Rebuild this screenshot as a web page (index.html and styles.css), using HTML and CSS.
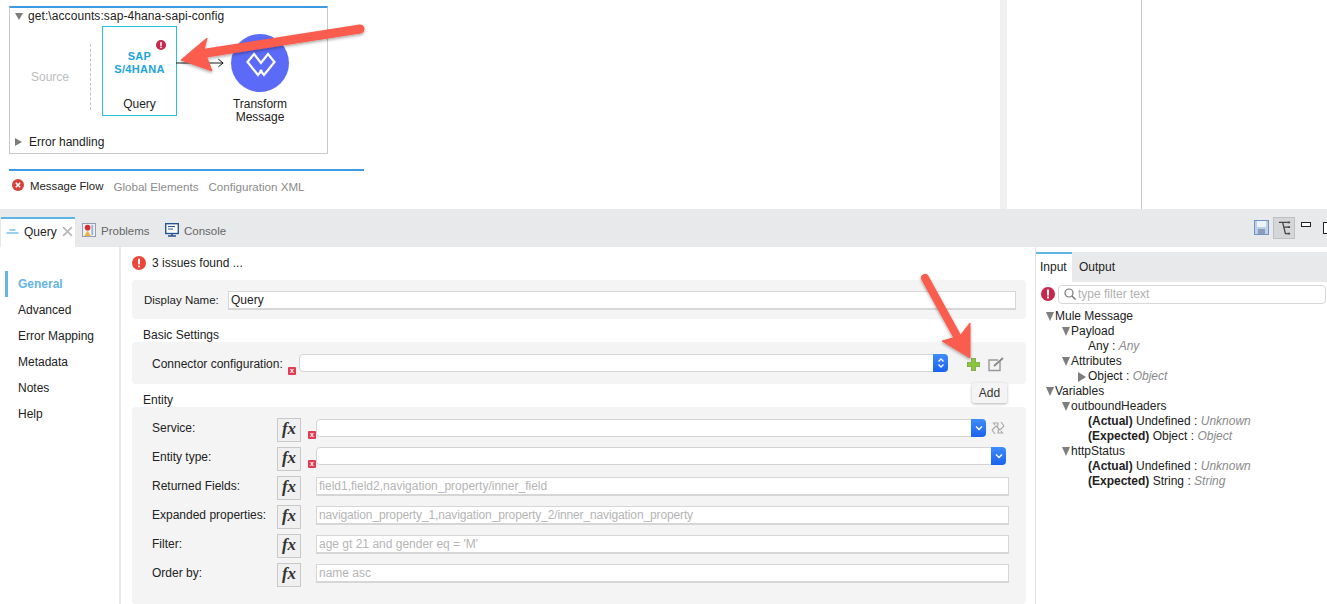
FILE: index.html
```html
<!DOCTYPE html>
<html lang="en">
<head>
<meta charset="utf-8">
<title>Query</title>
<link rel="stylesheet" href="styles.css">
</head>
<body>
<div class="app">
  <section class="top">
    <div class="editor">
      <div class="flow">
        <div class="flow-head"><span class="tri tri-down"></span>get:\accounts:sap-4hana-sapi-config</div>
        <div class="canvas">
          <span class="source">Source</span>
          <span class="dash"></span>
          <div class="node-query">
            <svg class="node-err" viewBox="0 0 10 10"><circle cx="5" cy="5" r="5" fill="#c8264a"/><rect x="4.2" y="2" width="1.6" height="3.8" fill="#fff"/><rect x="4.2" y="6.6" width="1.6" height="1.5" fill="#fff"/></svg>
            <div class="sap">SAP<br>S/4HANA</div>
            <div class="node-name">Query</div>
          </div>
          <svg class="connector" viewBox="0 0 52 10"><path d="M0 5H49M44 1l5 4-5 4" fill="none" stroke="#111" stroke-width="1"/></svg>
          <div class="node-transform">
            <svg class="circle" viewBox="0 0 58 58"><circle cx="29" cy="29" r="29" fill="#5c6bf7"/><path d="M31 36L27 41 16.500 28 23 20 30 29 37 20 43.500 28 33 41 29 36" fill="none" stroke="#fff" stroke-width="2.200"/></svg>
            <div class="node-name">Transform<br>Message</div>
          </div>
        </div>
        <div class="flow-foot"><span class="tri tri-right"></span>Error handling</div>
      </div>
      <div class="flow-tabs">
        <svg class="flow-err" viewBox="0 0 12 12"><circle cx="6" cy="6" r="6" fill="#d8413a"/><path d="M3.800 3.800l4.400 4.400M8.200 3.800l-4.400 4.400" stroke="#fff" stroke-width="1.600"/></svg>
        <span class="flow-tab active">Message Flow</span>
        <span class="flow-tab">Global Elements</span>
        <span class="flow-tab">Configuration XML</span>
      </div>
    </div>
    <div class="sash"></div>
    <div class="mid"></div>
    <div class="far"></div>
  </section>

  <nav class="bar">
    <div class="tab tab-active">
      <svg class="tab-q" viewBox="0 0 12 6"><path d="M3 1h6M0 4h12" stroke="#7cc0e8" stroke-width="1.400"/></svg>
      <span>Query</span>
      <svg class="tab-x" viewBox="0 0 10 10"><path d="M1 1l8 8M9 1l-8 8" stroke="#bdbdbd" stroke-width="1.800"/></svg>
    </div>
    <div class="tab tab-problems">
      <svg class="tab-ic" viewBox="0 0 15 15"><rect x=".5" y=".5" width="14" height="14" fill="#eef1f6" stroke="#8c9ab0"/><circle cx="6" cy="5" r="3" fill="#d92c2c"/><path d="M6 8l3.500 6h-7z" fill="#eeb23a"/><path d="M11 2v11" stroke="#9fb3cc" stroke-width="2"/></svg>
      <span>Problems</span>
    </div>
    <div class="tab">
      <svg class="tab-ic" viewBox="0 0 14 14"><rect x=".7" y=".7" width="12.600" height="9.800" fill="#fff" stroke="#28558f" stroke-width="1.400"/><path d="M3 3.500h7M3 6h5" stroke="#28558f"/><path d="M3 13h8M7 11v2" stroke="#28558f" stroke-width="1.600"/></svg>
      <span>Console</span>
    </div>
    <div class="bar-tools">
      <svg class="tool-save" viewBox="0 0 15 15"><rect x=".5" y=".5" width="14" height="14" fill="#bcd0ea" stroke="#6f93c4"/><rect x="3" y="1" width="9" height="6" fill="#eef3fa"/><rect x="4" y="9" width="7" height="5" fill="#8a9cb6"/></svg>
      <span class="tool-tree"><svg viewBox="0 0 14 16"><path d="M1 2h4l3 12h2M5.500 7H10M5 2h5" fill="none" stroke="#444" stroke-width="1.400"/><path d="M10 1h3v2h-3zM10 6h3v2h-3zM10 13h3v2h-3z" fill="#444"/></svg></span>
      <span class="tool-min"></span>
      <span class="tool-max"></span>
    </div>
  </nav>

  <section class="bottom">
    <aside class="side">
      <a class="side-item current">General</a>
      <a class="side-item">Advanced</a>
      <a class="side-item">Error Mapping</a>
      <a class="side-item">Metadata</a>
      <a class="side-item">Notes</a>
      <a class="side-item">Help</a>
    </aside>

    <main class="form">
      <div class="issues">
        <svg class="issue-ic" viewBox="0 0 14 14"><circle cx="7" cy="7" r="7" fill="#e8473a"/><rect x="6" y="2.600" width="2" height="5.800" rx="1" fill="#fff"/><rect x="6" y="9.400" width="2" height="2" rx="1" fill="#fff"/></svg>
        <span>3 issues found ...</span>
      </div>

      <div class="panel panel-name">
        <label class="lbl">Display Name:</label>
        <input class="text name-input" value="Query">
      </div>

      <h3 class="group">Basic Settings</h3>
      <div class="panel panel-conn">
        <label class="lbl conn-lbl">Connector configuration:</label>
        <span class="err err-conn">x</span>
        <div class="select conn-select"><span class="sel-btn updown"><svg viewBox="0 0 8 12"><path d="M1.500 4.500L4 2l2.500 2.500M1.500 7.500L4 10l2.500-2.500" fill="none" stroke="#fff" stroke-width="1.300"/></svg></span></div>
        <svg class="plus" viewBox="0 0 13 13"><path d="M4.500 0h4v4.500H13v4H8.500V13h-4V8.500H0v-4h4.500z" fill="#8cc63f" stroke="#5f8f2a" stroke-width=".6"/></svg>
        <svg class="edit" viewBox="0 0 16 15"><path d="M12 4v9.500H1V3h9" fill="#f3f3f3" stroke="#999" stroke-width="1.400"/><path d="M6 9l9-8" stroke="#888" stroke-width="1.800"/></svg>
      </div>

      <h3 class="group">Entity</h3>
      <div class="panel panel-entity">
        <div class="row">
          <label class="lbl">Service:</label>
          <span class="fx">fx</span>
          <span class="err">x</span>
          <div class="field-wrap">
            <div class="select svc-select"><span class="sel-btn"><svg viewBox="0 0 8 6"><path d="M1 1.500L4 4.500l3-3" fill="none" stroke="#fff" stroke-width="1.400"/></svg></span></div>
            <svg class="sync" viewBox="0 0 16 16"><path d="M2 10l4-4 1.500 1.500.5-4.500H3.500L5 5M14 6l-4 4-1.500-1.500-.5 4.500h4.500L11 11M2 10l3 4M14 6l-3-4" fill="none" stroke="#aaa" stroke-width="1.200"/></svg>
          </div>
        </div>
        <div class="row">
          <label class="lbl">Entity type:</label>
          <span class="fx">fx</span>
          <span class="err">x</span>
          <div class="field-wrap">
            <div class="select ent-select"><span class="sel-btn"><svg viewBox="0 0 8 6"><path d="M1 1.500L4 4.500l3-3" fill="none" stroke="#fff" stroke-width="1.400"/></svg></span></div>
          </div>
        </div>
        <div class="row">
          <label class="lbl">Returned Fields:</label>
          <span class="fx">fx</span>
          <span></span>
          <input class="text" placeholder="field1,field2,navigation_property/inner_field">
        </div>
        <div class="row">
          <label class="lbl">Expanded properties:</label>
          <span class="fx">fx</span>
          <span></span>
          <input class="text tight" placeholder="navigation_property_1,navigation_property_2/inner_navigation_property">
        </div>
        <div class="row">
          <label class="lbl">Filter:</label>
          <span class="fx">fx</span>
          <span></span>
          <input class="text" placeholder="age gt 21 and gender eq = 'M'">
        </div>
        <div class="row">
          <label class="lbl">Order by:</label>
          <span class="fx">fx</span>
          <span></span>
          <input class="text" placeholder="name asc">
        </div>
      </div>
    </main>

    <aside class="meta">
      <div class="meta-tabs">
        <span class="meta-tab on">Input</span>
        <span class="meta-tab">Output</span>
      </div>
      <div class="filter">
        <svg class="filter-err" viewBox="0 0 14 14"><circle cx="7" cy="7" r="7" fill="#c8264a"/><rect x="6" y="2.500" width="2" height="6" fill="#fff"/><rect x="6" y="9.500" width="2" height="2" fill="#fff"/></svg>
        <div class="search">
          <svg class="glass" viewBox="0 0 12 12"><circle cx="5" cy="5" r="4" fill="none" stroke="#777" stroke-width="1.200"/><path d="M8 8l3.500 3.500" stroke="#777" stroke-width="1.400"/></svg>
          <span>type filter text</span>
        </div>
      </div>
      <ul class="tree">
        <li class="lv0"><span class="tri tri-down"></span>Mule Message</li>
        <li class="lv1"><span class="tri tri-down"></span>Payload</li>
        <li class="lv2">Any : <i>Any</i></li>
        <li class="lv1"><span class="tri tri-down"></span>Attributes</li>
        <li class="lv2"><span class="tri tri-right"></span>Object : <i>Object</i></li>
        <li class="lv0"><span class="tri tri-down"></span>Variables</li>
        <li class="lv1"><span class="tri tri-down"></span>outboundHeaders</li>
        <li class="lv2"><b>(Actual)</b> Undefined : <i>Unknown</i></li>
        <li class="lv2"><b>(Expected)</b> Object : <i>Object</i></li>
        <li class="lv1"><span class="tri tri-down"></span>httpStatus</li>
        <li class="lv2"><b>(Actual)</b> Undefined : <i>Unknown</i></li>
        <li class="lv2"><b>(Expected)</b> String : <i>String</i></li>
      </ul>
    </aside>
  </section>

  <div class="tooltip">Add</div>

  <svg class="callouts" viewBox="0 0 1327 604">
    <defs>
      <filter id="sh" x="-20%" y="-20%" width="140%" height="140%"><feDropShadow dx="0" dy="1.500" stdDeviation="1.500" flood-color="#000" flood-opacity=".35"/></filter>
    </defs>
    <g filter="url(#sh)" fill="#fa5b4d" stroke="#fa5b4d">
      <path d="M360 29L200 54" stroke-width="9" stroke-linecap="round"/>
      <path d="M181 60L207 38L204 50L212 71Z" stroke-width="1"/>
      <path d="M925 278L958 338" stroke-width="8" stroke-linecap="round"/>
      <path d="M970 358L970 323L960 336L942 341Z" stroke-width="1"/>
    </g>
  </svg>
</div>
</body>
</html>
```

FILE: styles.css
```css
* { box-sizing: border-box; }
html, body { margin: 0; padding: 0; background: #fff; }
body {
  font-family: "Liberation Sans", Arial, sans-serif;
  font-size: 12px;
  color: #222;
  overflow: hidden;
}
.app { position: relative; width: 1327px; height: 604px; overflow: hidden; display: flex; flex-direction: column; }

/* top editor */
.top { display: flex; height: 209px; flex: none; }
.editor { width: 1000px; flex: none; padding: 6px 0 0 9px; }
.sash { width: 7px; background: #f0f0f1; flex: none; }
.mid { width: 135px; flex: none; border-right: 1px solid #c9c9c9; }
.far { flex: 1; }

.flow { width: 319px; height: 148px; border: 1px solid #c8c8c8; border-top: 2px solid #3d9be3; display: flex; flex-direction: column; }
.flow-head { height: 16px; padding-left: 5px; line-height: 16px; display: flex; align-items: center; letter-spacing: .08px; }
.canvas { position: relative; height: 111px; flex: none; }
.flow-foot { padding-left: 5px; display: flex; align-items: center; height: 14px; }
.tri { display: inline-block; flex: none; width: 0; height: 0; }
.tri-down { border-left: 4.500px solid transparent; border-right: 4.500px solid transparent; border-top: 7px solid #7e7e7e; margin-right: 5px; }
.tri-right { border-top: 4.500px solid transparent; border-bottom: 4.500px solid transparent; border-left: 7px solid #7e7e7e; margin-right: 7px; }

.source { position: absolute; left: 21px; top: 46px; color: #bdbdbd; }
.dash { position: absolute; left: 80px; top: 20px; height: 66px; border-left: 1px dashed #c4c4c4; }
.node-query { position: absolute; left: 92px; top: 2px; width: 75px; height: 90px; border: 1px solid #26c3dc; text-align: center; }
.node-err { position: absolute; left: 53px; top: 13px; width: 10px; height: 10px; }
.sap { margin-top: 23px; color: #1ba4de; font-weight: 700; font-size: 11px; line-height: 13px; letter-spacing: .3px; }
.node-name { text-align: center; line-height: 13px; }
.node-query .node-name { margin-top: 22px; }
.connector { position: absolute; left: 166px; top: 34px; width: 50px; height: 10px; }
.node-transform { position: absolute; left: 205px; top: 10px; width: 90px; display: flex; flex-direction: column; align-items: center; }
.circle { width: 58px; height: 58px; margin-bottom: 6px; }

.flow-tabs { margin-top: 15px; width: 355px; border-top: 2px solid #3d9be3; display: flex; align-items: center; padding: 0 0 0 3px; height: 32px; }
.flow-err { width: 12px; height: 12px; margin-right: 6px; margin-top: -3px; }
.flow-tab { color: #8b8b8b; margin-right: 10px; font-size: 11.600px; }
.flow-tab.active { color: #222; font-size: 11.400px; }

/* tab bar */
.bar { height: 38px; flex: none; background: #e8e9eb; display: flex; align-items: flex-end; padding-left: 1px; font-size: 11.500px; }
.tab { height: 30px; display: flex; align-items: center; color: #666; padding-left: 7px; padding-bottom: 2px; }
.tab-active { width: 74px; background: #fff; border-top: 2px solid #5fb6e6; color: #222; padding-left: 5px; padding-bottom: 3px; font-size: 12px; }
.tab-problems { width: 83px; }
.tab-q { width: 13px; height: 6px; margin-right: 5px; }
.tab-x { width: 11px; height: 11px; margin-left: 5px; }
.tab-ic { width: 14px; height: 14px; margin-right: 5px; margin-top: -2px; }
.bar-tools { margin-left: auto; align-self: stretch; display: flex; align-items: center; width: 72px; flex: none; }
.tool-save { width: 15px; height: 15px; flex: none; margin-left: -1px; margin-top: -1px; }
.tool-tree { width: 22px; height: 22px; flex: none; margin-left: 4px; margin-top: -1px; background: #d5d6d8; border: 1px solid #bfc0c2; display: flex; align-items: center; justify-content: center; }
.tool-tree svg { width: 13px; height: 16px; }
.tool-min { width: 10px; height: 5px; flex: none; margin: -8px 0 0 6px; border: 1px solid #222; background: #fff; }
.tool-max { width: 12px; height: 12px; flex: none; margin: 0 0 0 12px; border: 1px solid #222; background: #fff; }

/* bottom */
.bottom { flex: 1; display: flex; min-height: 0; }
.side { width: 121px; flex: none; border-right: 2px solid #e9e9e9; padding: 24px 0 0 5px; display: flex; flex-direction: column; }
.side-item { height: 26px; line-height: 26px; padding-left: 13px; color: #222; }
.side-item.current { color: #65b4e6; font-weight: 700; border-left: 3px solid #65b4e6; padding-left: 10px; }

.form { width: 914px; flex: none; padding: 8px 9px 0 11px; display: flex; flex-direction: column; }
.issues { height: 16px; display: flex; align-items: center; gap: 6px; margin-bottom: 9px; }
.issue-ic { width: 14px; height: 14px; flex: none; }
.panel { background: #f4f4f4; border-radius: 4px; flex: none; }
.panel-name { height: 39px; display: flex; align-items: center; padding: 0 10px 0 12px; }
.panel-name .lbl { width: 84px; flex: none; font-size: 11.500px; }
.name-input { flex: 1; color: #222; margin-top: 2px; }
.group { margin: 0; font-size: 12px; font-weight: 400; height: 23px; padding: 9px 0 0 11px; line-height: 14px; flex: none; }
.panel-conn { height: 42px; display: flex; align-items: center; padding: 2px 0 0 20px; }
.conn-lbl { width: 136px; flex: none; white-space: nowrap; }
.err { display: block; width: 8px; height: 8px; border-radius: 1px; background: #e23b52; color: #fff; font-size: 7px; line-height: 7px; font-weight: 700; text-align: center; }
.err-conn { margin-top: 14px; flex: none; }
.select { height: 18px; background: #fff; border: 1px solid #d4d4d4; border-radius: 4px; display: flex; justify-content: flex-end; }
.conn-select { width: 649px; margin-left: 3px; flex: none; margin-top: -2px; }
.sel-btn { width: 15px; margin: -1px -1px -1px 0; background: linear-gradient(#3e8dfb, #1a62ee); border-radius: 0 4px 4px 0; display: flex; align-items: center; justify-content: center; }
.sel-btn svg { width: 8px; }
.plus { width: 13px; height: 13px; margin-left: 19px; flex: none; }
.edit { width: 16px; height: 15px; margin-left: 8px; flex: none; }
.panel-entity { flex: 1; padding: 11px 17px 0 20px; display: grid; grid-template-columns: 125px 31px 8px 1fr; grid-auto-rows: 29px; align-content: start; }
.row { display: contents; }
.row .lbl { padding-top: 2px; line-height: 16px; }
.fx { width: 24px; height: 24px; background: #f0f0f0; border: 1px solid #c9c9c9; text-align: center; font: italic 700 17px/19px "Liberation Serif", serif; color: #333; }
.row .err { margin-top: 13px; align-self: start; }
.field-wrap { display: flex; align-items: flex-start; }
.svc-select { width: 670px; margin-top: 1px; }
.ent-select { width: 690px; }
.sync { width: 16px; height: 16px; margin: 2px 0 0 4px; }
.text { display: block; height: 19px; width: 100%; border: 2px solid #d6d6d6; border-width: 1px 1px 2px 1px; background: #fff; font: inherit; padding: 0 0 0 2px; outline: 0; border-radius: 0; }
.row .text { width: 693px; margin-top: 1px; }
.text::placeholder { color: #b5b5b5; opacity: 1; }
.tight::placeholder { letter-spacing: -.13px; }

/* right panel */
.meta { flex: 1; border-left: 1px solid #e4e4e4; padding-top: 5px; min-width: 0; }
.meta-tabs { height: 30px; background: #e8e9eb; display: flex; }
.meta-tab { height: 30px; line-height: 30px; padding: 0 7px; }
.meta-tab.on { width: 36px; padding: 0 0 0 4px; background: #fff; border-top: 2px solid #5fb6e6; line-height: 26px; }
.filter { display: flex; align-items: center; padding: 2px 0 0 5px; height: 22px; }
.filter-err { width: 14px; height: 14px; flex: none; }
.search { margin-left: 3px; width: 268px; height: 19px; border: 1px solid #d8d8d8; border-radius: 4px; display: flex; align-items: center; padding-left: 5px; color: #b0b0b0; gap: 2px; }
.glass { width: 12px; height: 12px; flex: none; }
.tree { list-style: none; margin: 5px 0 0; padding: 0; }
.tree li { height: 15px; line-height: 15px; display: flex; align-items: center; white-space: pre; }
.tree i { color: #8a8a8a; }
.tree b { font-weight: 700; }
.lv0 { padding-left: 10px; }
.lv1 { padding-left: 26px; }
.lv2 { padding-left: 52px; }
.tree .tri-right { margin-left: -10px; margin-right: 2px; border-top-width: 5px; border-bottom-width: 5px; border-left-width: 8px; }
.tree .tri-down { margin-right: 1px; border-left-width: 4.500px; border-right-width: 4.500px; border-top-width: 9px; }

/* overlays */
.tooltip { position: absolute; left: 972px; top: 383px; width: 35px; height: 20px; background: #f4f4f4; border-radius: 2px; box-shadow: 0 1px 3px rgba(0,0,0,.3); text-align: center; line-height: 20px; color: #333; }
.callouts { position: absolute; left: 0; top: 0; width: 1327px; height: 604px; pointer-events: none; }
```
